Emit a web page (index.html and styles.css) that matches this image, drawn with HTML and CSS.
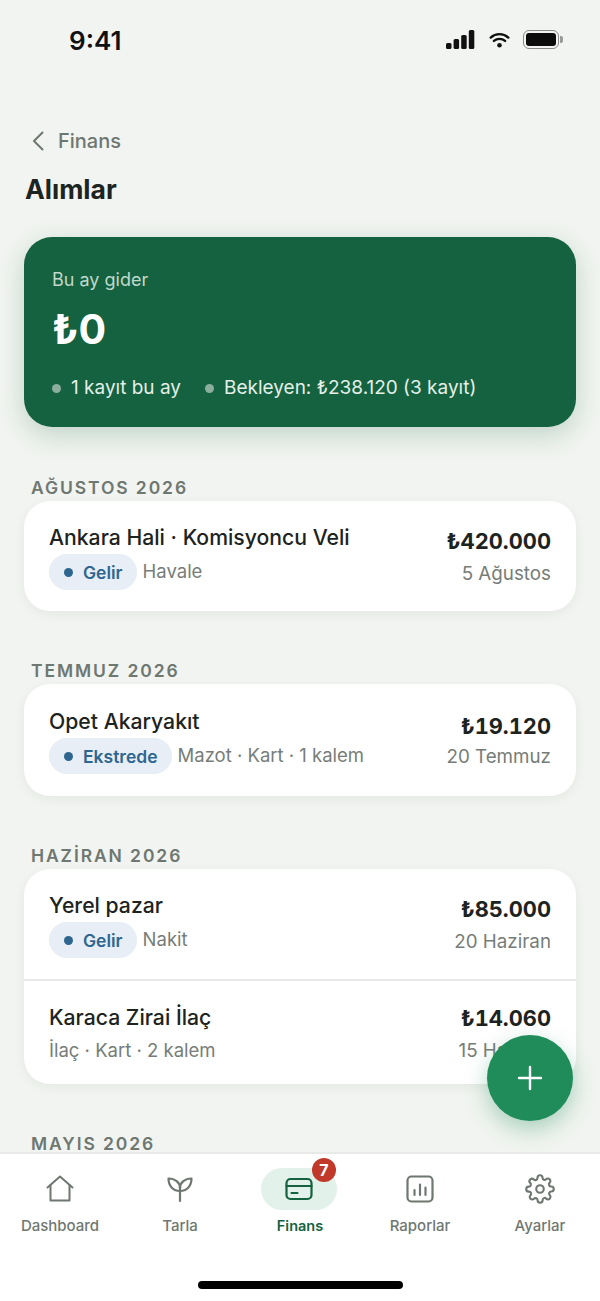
FILE: index.html
```html
<!DOCTYPE html>
<html lang="tr">
<head>
    <meta charset="UTF-8">
    <meta name="viewport" content="width=device-width, initial-scale=1.0">
    <title>Alımlar</title>
    <link rel="stylesheet" href="styles.css">
</head>
<body>
    <div class="screen">
        <div class="statusbar">
            <span class="time">9:41</span>
            <div class="status-icons">
                <svg width="29" height="19" viewBox="0 0 29 19"><rect x="0" y="13" width="5.5" height="6" rx="1.5"/><rect x="7.6" y="9" width="5.5" height="10" rx="1.5"/><rect x="15.2" y="5" width="5.5" height="14" rx="1.5"/><rect x="22.8" y="0" width="5.5" height="19" rx="1.5"/></svg>
                <svg class="wifi" width="21" height="16" viewBox="0 0 20 16"><path d="M1.2 5.6C6.2 1 13.800 1 18.800 5.600M4.400 8.900C7.600 6.200 12.400 6.200 15.600 8.900" fill="none" stroke="#111" stroke-width="2.400" stroke-linecap="round"/><circle cx="10" cy="13.300" r="2.300"/></svg>
                <div class="battery"><div class="battery-fill"></div></div>
                <div class="battery-cap"></div>
            </div>
        </div>

        <div class="back">
            <svg width="12" height="20" viewBox="0 0 12 20"><path d="M10.500 1.500L2 10l8.500 8.500" fill="none" stroke="#6f7771" stroke-width="2" stroke-linecap="round" stroke-linejoin="round"/></svg>
            <span>Finans</span>
        </div>
        <h1>Alımlar</h1>

        <div class="hero">
            <div class="hero-label">Bu ay gider</div>
            <div class="hero-value">₺0</div>
            <div class="hero-stats">
                <span class="stat"><i class="stat-dot"></i>1 kayıt bu ay</span>
                <span class="stat"><i class="stat-dot"></i>Bekleyen: ₺238.120 (3 kayıt)</span>
            </div>
        </div>

        <section class="month month-first">
            <h2>AĞUSTOS 2026</h2>
            <div class="card">
                <div class="row">
                    <div class="row-main">
                        <div class="row-title">Ankara Hali · Komisyoncu Veli</div>
                        <div class="row-meta"><span class="pill"><i></i>Gelir</span><span class="meta-text">Havale</span></div>
                    </div>
                    <div class="row-side">
                        <div class="amount">₺420.000</div>
                        <div class="date">5 Ağustos</div>
                    </div>
                </div>
            </div>
        </section>

        <section class="month">
            <h2>TEMMUZ 2026</h2>
            <div class="card">
                <div class="row row-tall">
                    <div class="row-main">
                        <div class="row-title">Opet Akaryakıt</div>
                        <div class="row-meta"><span class="pill"><i></i>Ekstrede</span><span class="meta-text">Mazot · Kart · 1 kalem</span></div>
                    </div>
                    <div class="row-side">
                        <div class="amount">₺19.120</div>
                        <div class="date">20 Temmuz</div>
                    </div>
                </div>
            </div>
        </section>

        <section class="month">
            <h2>HAZİRAN 2026</h2>
            <div class="card">
                <div class="row">
                    <div class="row-main">
                        <div class="row-title">Yerel pazar</div>
                        <div class="row-meta"><span class="pill"><i></i>Gelir</span><span class="meta-text">Nakit</span></div>
                    </div>
                    <div class="row-side">
                        <div class="amount">₺85.000</div>
                        <div class="date">20 Haziran</div>
                    </div>
                </div>
                <div class="row row-plain">
                    <div class="row-main">
                        <div class="row-title">Karaca Zirai İlaç</div>
                        <div class="row-meta"><span class="meta-text meta-only">İlaç · Kart · 2 kalem</span></div>
                    </div>
                    <div class="row-side">
                        <div class="amount">₺14.060</div>
                        <div class="date">15 Haziran</div>
                    </div>
                </div>
            </div>
        </section>

        <section class="month">
            <h2>MAYIS 2026</h2>
        </section>

        <button class="fab" aria-label="Ekle">
            <svg width="26" height="26" viewBox="0 0 26 26"><path d="M13 2v22M2 13h22" stroke="#fff" stroke-width="2.400" stroke-linecap="round"/></svg>
        </button>

        <nav class="tabbar">
            <div class="tab">
                <div class="tab-icon">
                    <svg width="30" height="30" viewBox="0 0 30 30" fill="none" stroke="#6f7771" stroke-width="2" stroke-linecap="round" stroke-linejoin="round"><path d="M2.500 13.500L15 2.500l12.500 11"/><path d="M5.500 11v15.500h19V11"/></svg>
                </div>
                <span>Dashboard</span>
            </div>
            <div class="tab">
                <div class="tab-icon">
                    <svg width="28" height="28" viewBox="0 0 28 28" fill="none" stroke="#6f7771" stroke-width="2.200" stroke-linecap="round" stroke-linejoin="round"><path d="M14 26V12"/><path d="M14 16C7.500 16 2.500 11.500 2.500 3.500 9 3.500 14 7.500 14 13"/><path d="M14 13c0-5.500 5-9.500 11.500-9.500C25.500 11.500 20.500 16 14 16"/></svg>
                </div>
                <span>Tarla</span>
            </div>
            <div class="tab tab-active">
                <div class="tab-icon">
                    <svg width="28" height="24" viewBox="0 0 28 24" fill="none" stroke="#14623f" stroke-width="2.200" stroke-linecap="round" stroke-linejoin="round"><rect x="1.500" y="2" width="25" height="20" rx="4"/><path d="M1.500 9h25M6.500 16h6"/></svg>
                    <span class="badge">7</span>
                </div>
                <span>Finans</span>
            </div>
            <div class="tab">
                <div class="tab-icon">
                    <svg width="28" height="28" viewBox="0 0 28 28" fill="none" stroke="#6f7771" stroke-width="2.200" stroke-linecap="round" stroke-linejoin="round"><rect x="1.500" y="1.500" width="25" height="25" rx="4"/><path d="M8.500 20v-5M14 20V9.500M19.500 20v-7.500"/></svg>
                </div>
                <span>Raporlar</span>
            </div>
            <div class="tab">
                <div class="tab-icon">
                    <svg width="30" height="30" viewBox="0 0 24 24" fill="none" stroke="#6f7771" stroke-width="1.700" stroke-linecap="round" stroke-linejoin="round"><circle cx="12" cy="12" r="3"/><path d="M19.400 15a1.650 1.650 0 0 0 .33 1.820l.06.06a2 2 0 1 1-2.830 2.830l-.06-.06a1.650 1.650 0 0 0-2.820 1.170V21a2 2 0 0 1-4 0v-.09a1.650 1.650 0 0 0-2.820-1.150l-.06.06a2 2 0 1 1-2.830-2.830l.06-.06a1.650 1.650 0 0 0-1.170-2.820H3a2 2 0 0 1 0-4h.09a1.650 1.650 0 0 0 1.150-2.820l-.06-.06a2 2 0 1 1 2.830-2.830l.06.06a1.650 1.650 0 0 0 1.820.33H9a1.650 1.650 0 0 0 1-1.510V3a2 2 0 0 1 4 0v.09a1.650 1.650 0 0 0 2.820 1.150l.06-.06a2 2 0 1 1 2.830 2.830l-.06.06a1.650 1.650 0 0 0-.33 1.820V9a1.650 1.650 0 0 0 1.510 1H21a2 2 0 0 1 0 4h-.09a1.650 1.650 0 0 0-1.510 1z"/></svg>
                </div>
                <span>Ayarlar</span>
            </div>
            <div class="home-indicator"></div>
        </nav>
    </div>
</body>
</html>
```

FILE: styles.css
```css
html, body {
    margin: 0;
    padding: 0;
}
body {
    font-family: "Inter", "DejaVu Sans", sans-serif;
    background-color: #f1f4f0;
    color: #1d2320;
}
.screen {
    position: relative;
    width: 600px;
    height: 1301px;
    overflow: hidden;
    padding: 0 24px;
    box-sizing: border-box;
}
.statusbar {
    display: flex;
    justify-content: space-between;
    align-items: center;
    height: 24px;
    padding: 28px 13px 0 45px;
}
.time {
    font-size: 26px;
    font-weight: 600;
    color: #111;
}
.status-icons {
    display: flex;
    align-items: center;
    margin-top: -1px;
}
.status-icons svg {
    fill: #111;
    margin-right: 14px;
}
.status-icons .wifi {
    margin-right: 13px;
}
.battery {
    width: 36px;
    height: 19px;
    padding: 2px;
    box-sizing: border-box;
    border: 1.500px solid #8a8a8a;
    border-radius: 6px;
}
.battery-fill {
    width: 100%;
    height: 100%;
    background-color: #0b0b0b;
    border-radius: 3px;
}
.battery-cap {
    width: 3px;
    height: 7px;
    margin-left: 1px;
    background-color: #9a9a9a;
    border-radius: 0 2px 2px 0;
}
.back {
    display: flex;
    align-items: center;
    gap: 14px;
    margin: 77px 0 0 8px;
    height: 24px;
    font-size: 20px;
    font-weight: 500;
    color: #6f7771;
}
h1 {
    margin: 20px 0 0 1px;
    font-size: 26.500px;
    line-height: 32px;
    font-weight: 700;
}
.hero {
    height: 190px;
    margin-top: 32px;
    padding: 31px 28px 0;
    box-sizing: border-box;
    background-color: #14623f;
    border-radius: 28px;
    box-shadow: 0 8px 26px rgba(20, 98, 63, 0.22);
}
.hero-label {
    font-size: 18px;
    line-height: 24px;
    color: #c1d8cb;
}
.hero-value {
    margin-top: 14px;
    font-size: 41px;
    line-height: 46px;
    font-weight: 700;
    color: #fff;
}
.hero-stats {
    display: flex;
    gap: 24px;
    margin-top: 24px;
    font-size: 19px;
    line-height: 24px;
    color: #e4efe9;
}
.stat {
    display: flex;
    align-items: center;
    gap: 10px;
}
.stat-dot {
    width: 9px;
    height: 9px;
    border-radius: 50%;
    background-color: #8cae9c;
}
.month {
    margin-top: 49px;
}
.month-first {
    margin-top: 50px;
}
h2 {
    margin: 0 0 3px 7px;
    height: 21px;
    font-size: 17.500px;
    line-height: 21px;
    font-weight: 600;
    letter-spacing: 1.900px;
    color: #6f7771;
}
.card {
    background-color: #fff;
    border-radius: 26px;
    box-shadow: 0 3px 12px rgba(30, 50, 40, 0.06);
    overflow: hidden;
}
.row {
    display: flex;
    justify-content: space-between;
    height: 110px;
    padding: 21px 25px 0;
    box-sizing: border-box;
}
.row + .row {
    border-top: 2px solid #e8eae7;
}
.row-tall {
    height: 112px;
    padding-top: 22px;
}
.row-plain {
    height: 105px;
}
.row-title {
    font-size: 21.200px;
    line-height: 30px;
    font-weight: 500;
}
.row-meta {
    display: flex;
    margin-top: 2px;
    font-size: 18.500px;
}
.row-plain .row-meta {
    margin-top: 0;
}
.pill {
    display: flex;
    align-items: center;
    gap: 10px;
    height: 36px;
    padding: 0 14px 0 15px;
    border-radius: 18px;
    background-color: #e7eef5;
    color: #2f6690;
    font-size: 17.500px;
    font-weight: 600;
}
.pill i {
    width: 9px;
    height: 9px;
    border-radius: 50%;
    background-color: #2f6690;
}
.meta-text {
    margin-left: 6px;
    line-height: 34px;
    color: #767d78;
}
.meta-only {
    margin-left: 0;
    line-height: 36px;
}
.row-side {
    text-align: right;
}
.amount {
    margin-top: 4px;
    font-size: 21.800px;
    line-height: 30px;
    font-weight: 700;
    font-variant-numeric: tabular-nums;
}
.date {
    margin-top: 3px;
    font-size: 18.800px;
    line-height: 30px;
    color: #767d78;
}
.row-tall .amount {
    margin-top: 5px;
}
.row-tall .date {
    margin-top: 1px;
}
.row-plain .amount {
    margin-top: 1px;
}
.fab {
    position: absolute;
    left: 487px;
    top: 1035px;
    width: 86px;
    height: 86px;
    padding: 0;
    display: flex;
    align-items: center;
    justify-content: center;
    border: none;
    border-radius: 50%;
    background-color: #208c5a;
    box-shadow: 0 8px 22px rgba(32, 140, 90, 0.35);
}
.tabbar {
    position: absolute;
    left: 0;
    right: 0;
    bottom: 0;
    height: 149px;
    display: flex;
    box-sizing: border-box;
    border-top: 2px solid #e8eae7;
    background-color: #fff;
}
.tab {
    flex: 1;
    display: flex;
    flex-direction: column;
    align-items: center;
    padding-top: 14px;
    font-size: 15px;
    line-height: 20px;
    font-weight: 500;
    color: #6f7771;
}
.tab-icon {
    position: relative;
    display: flex;
    align-items: center;
    justify-content: center;
    width: 76px;
    height: 42px;
    margin-bottom: 6px;
    border-radius: 21px;
}
.tab-active {
    color: #14623f;
    font-size: 14.500px;
    font-weight: 600;
}
.tab-active .tab-icon {
    margin-left: -2px;
    background-color: #e2f1e9;
}
.badge {
    position: absolute;
    top: -10px;
    right: 1px;
    width: 24px;
    height: 24px;
    border-radius: 50%;
    background-color: #c0392b;
    color: #fff;
    font-size: 16px;
    line-height: 24px;
    font-weight: 700;
    text-align: center;
}
.home-indicator {
    position: absolute;
    left: 198px;
    bottom: 12px;
    width: 205px;
    height: 8px;
    border-radius: 4px;
    background-color: #000;
}
```
